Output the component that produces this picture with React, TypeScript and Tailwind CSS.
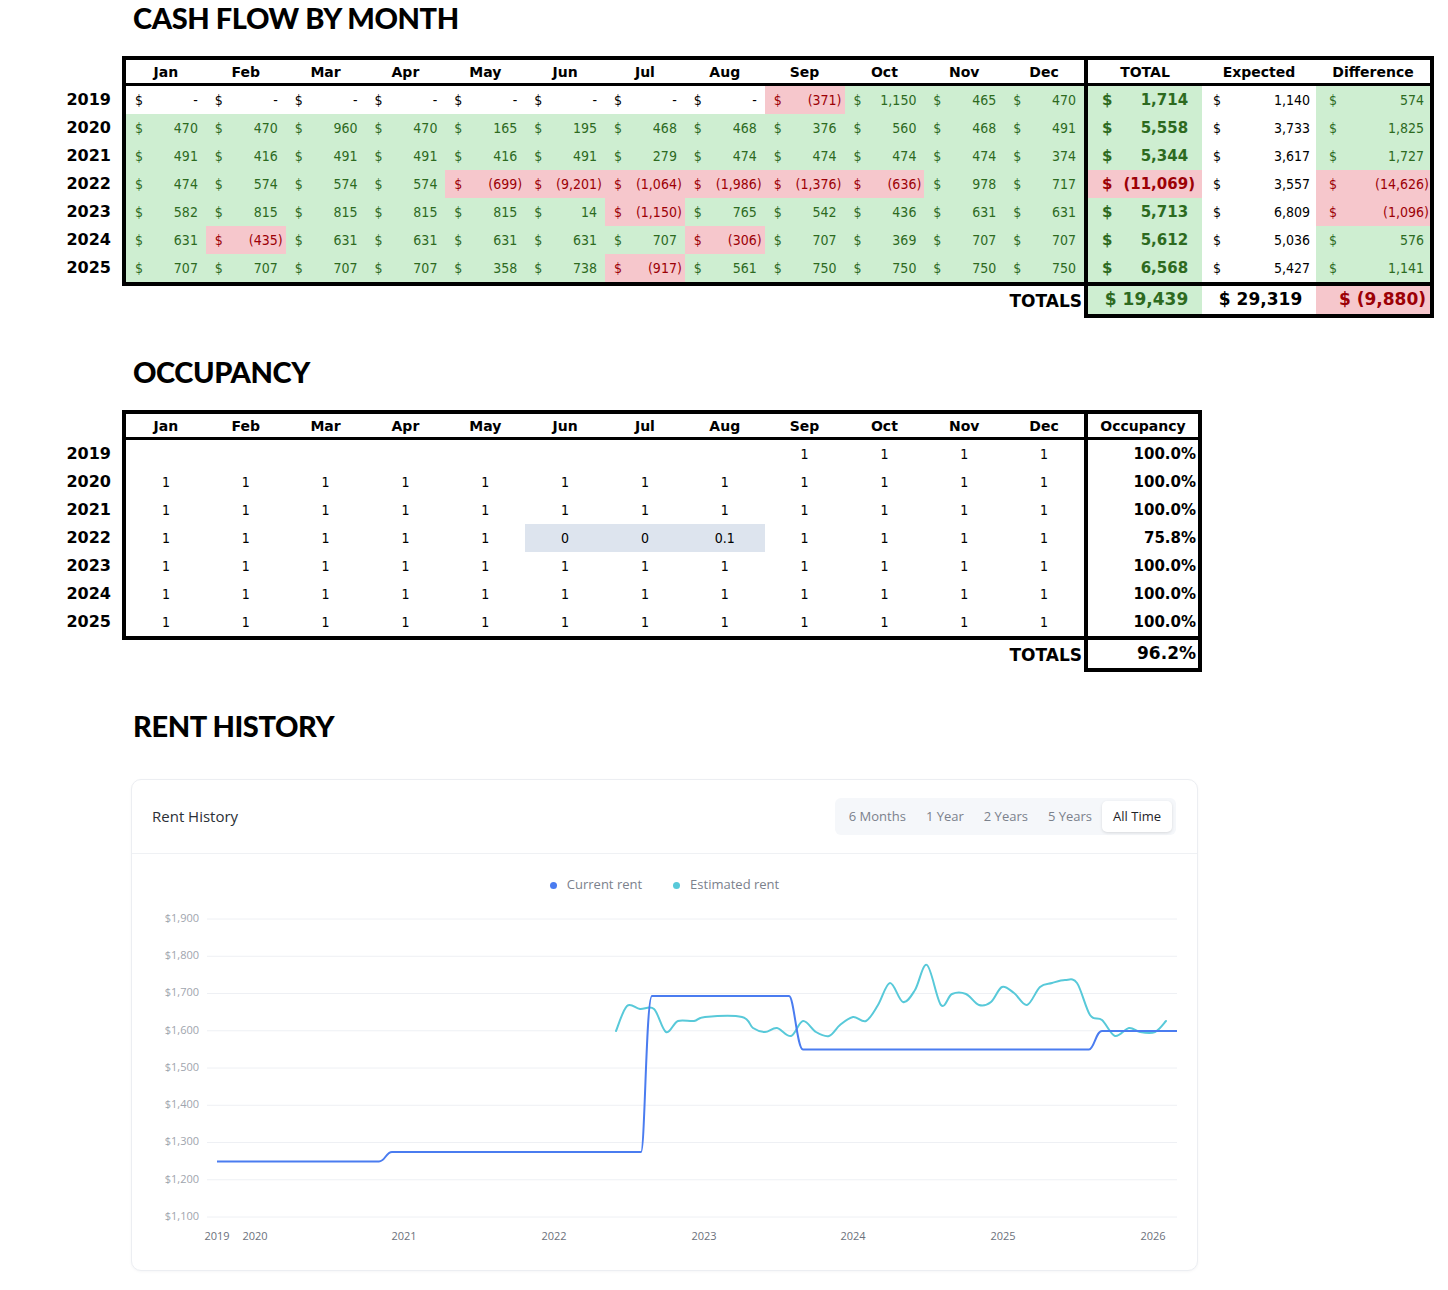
import React from "react";

const months = ["Jan", "Feb", "Mar", "Apr", "May", "Jun", "Jul", "Aug", "Sep", "Oct", "Nov", "Dec"];

type CashRow = { year: number; m: number[]; total: number; expected: number; diff: number };

const cashRows: CashRow[] = [
	{ year: 2019, m: [0, 0, 0, 0, 0, 0, 0, 0, -371, 1150, 465, 470], total: 1714, expected: 1140, diff: 574 },
	{ year: 2020, m: [470, 470, 960, 470, 165, 195, 468, 468, 376, 560, 468, 491], total: 5558, expected: 3733, diff: 1825 },
	{ year: 2021, m: [491, 416, 491, 491, 416, 491, 279, 474, 474, 474, 474, 374], total: 5344, expected: 3617, diff: 1727 },
	{ year: 2022, m: [474, 574, 574, 574, -699, -9201, -1064, -1986, -1376, -636, 978, 717], total: -11069, expected: 3557, diff: -14626 },
	{ year: 2023, m: [582, 815, 815, 815, 815, 14, -1150, 765, 542, 436, 631, 631], total: 5713, expected: 6809, diff: -1096 },
	{ year: 2024, m: [631, -435, 631, 631, 631, 631, 707, -306, 707, 369, 707, 707], total: 5612, expected: 5036, diff: 576 },
	{ year: 2025, m: [707, 707, 707, 707, 358, 738, -917, 561, 750, 750, 750, 750], total: 6568, expected: 5427, diff: 1141 },
];

type OccRow = { year: number; m: (number | null)[]; pct: string };

const occRows: OccRow[] = [
	{ year: 2019, m: [null, null, null, null, null, null, null, null, 1, 1, 1, 1], pct: "100.0%" },
	{ year: 2020, m: Array(12).fill(1), pct: "100.0%" },
	{ year: 2021, m: Array(12).fill(1), pct: "100.0%" },
	{ year: 2022, m: [1, 1, 1, 1, 1, 0, 0, 0.1, 1, 1, 1, 1], pct: "75.8%" },
	{ year: 2023, m: Array(12).fill(1), pct: "100.0%" },
	{ year: 2024, m: Array(12).fill(1), pct: "100.0%" },
	{ year: 2025, m: Array(12).fill(1), pct: "100.0%" },
];

const fmt = (v: number) => (v < 0 ? `(${Math.abs(v).toLocaleString("en-US")})` : v.toLocaleString("en-US"));

const cond = "font-['DejaVu_Sans_Condensed','DejaVu_Sans',sans-serif]";
const bold = "font-['DejaVu_Sans',sans-serif] font-bold";

const tone = (v: number) => {
	if (v > 0) return "bg-[#ceeed1] text-[#2d6a1f]";
	if (v < 0) return "bg-[#f6c7cc] text-[#9c0006]";
	return "text-black";
};

const Title = ({ children }: { children: React.ReactNode }) => (
	<h2 className="pl-[133px] font-['Lato',sans-serif] font-black text-[29px] leading-[36px] tracking-[-0.4px] text-black">{children}</h2>
);

const Paren = ({ show }: { show: boolean }) => <span className={show ? "invisible" : "hidden"}>)</span>;

const MonthCell = ({ v }: { v: number }) => (
	<div className={`flex h-[28px] items-center justify-between pl-[9px] pr-[3px] text-[14px] ${cond} ${tone(v)}`}>
		<span>$</span>
		<span>
			{v === 0 ? "-" : fmt(v)}
			<Paren show={v >= 0} />
		</span>
	</div>
);

const YearCol = ({ years }: { years: number[] }) => (
	<div className={`w-[122px] pt-[30px] pr-[11px] text-right text-[16px] text-black ${bold}`}>
		{years.map((y) => (
			<div key={y} className="flex h-[28px] items-center justify-end">
				{y}
			</div>
		))}
	</div>
);

const HeadCell = ({ label }: { label: string }) => (
	<div className={`flex items-center justify-center pt-[2px] text-[14px] text-black ${bold}`}>{label}</div>
);

const CashFlow = () => (
	<section>
		<Title>CASH FLOW BY MONTH</Title>
		<div className="mt-[20px] flex">
			<YearCol years={cashRows.map((r) => r.year)} />
			<div className="flex border-[4px] border-black">
				<div className="w-[958px]">
					<div className="grid h-[26px] grid-cols-12 border-b-[3px] border-black">
						{months.map((m) => (
							<HeadCell key={m} label={m} />
						))}
					</div>
					{cashRows.map((r) => (
						<div key={r.year} className="grid grid-cols-12">
							{r.m.map((v, i) => (
								<MonthCell key={i} v={v} />
							))}
						</div>
					))}
				</div>
				<div className="w-[4px] bg-black" />
				<div className="w-[342px]">
					<div className="grid h-[26px] grid-cols-3 border-b-[3px] border-black">
						<HeadCell label="TOTAL" />
						<HeadCell label="Expected" />
						<HeadCell label="Difference" />
					</div>
					{cashRows.map((r) => (
						<div key={r.year} className="grid grid-cols-3">
							<div className={`flex h-[28px] items-center justify-between pl-[14px] pr-[7px] text-[15px] ${bold} ${tone(r.total)}`}>
								<span>$</span>
								<span>
									{fmt(r.total)}
									<Paren show={r.total >= 0} />
								</span>
							</div>
							<div className={`flex h-[28px] items-center justify-between pl-[11px] pr-[1px] text-[14px] text-black ${cond}`}>
								<span>$</span>
								<span>
									{fmt(r.expected)}
									<Paren show />
								</span>
							</div>
							<div className={`flex h-[28px] items-center justify-between pl-[13px] pr-[1px] text-[14px] ${cond} ${tone(r.diff)}`}>
								<span>$</span>
								<span>
									{fmt(r.diff)}
									<Paren show={r.diff >= 0} />
								</span>
							</div>
						</div>
					))}
				</div>
			</div>
		</div>
		<div className="flex">
			<div className={`flex w-[1084px] items-center justify-end pr-[2px] text-[17px] text-black ${bold}`}>TOTALS</div>
			<div className={`grid h-[32px] w-[350px] grid-cols-3 border-[4px] border-t-0 border-black text-[17px] ${bold}`}>
				<div className="flex items-center justify-end bg-[#ceeed1] pr-[6px] text-[#2d6a1f]">
					$ 19,439
					<Paren show />
				</div>
				<div className="flex items-center justify-end pr-[6px] text-black">
					$ 29,319
					<Paren show />
				</div>
				<div className="flex items-center justify-end bg-[#f6c7cc] pr-[4px] text-[#9c0006]">$ (9,880)</div>
			</div>
		</div>
	</section>
);

const Occupancy = () => (
	<section className="mt-[36px]">
		<Title>OCCUPANCY</Title>
		<div className="mt-[20px] flex">
			<YearCol years={occRows.map((r) => r.year)} />
			<div className="flex border-[4px] border-black">
				<div className="w-[958px]">
					<div className="grid h-[26px] grid-cols-12 border-b-[3px] border-black">
						{months.map((m) => (
							<HeadCell key={m} label={m} />
						))}
					</div>
					{occRows.map((r) => (
						<div key={r.year} className="grid grid-cols-12">
							{r.m.map((v, i) => (
								<div
									key={i}
									className={`flex h-[28px] items-center justify-center text-[14px] text-black ${cond} ${
										r.year === 2022 && i >= 5 && i <= 7 ? "bg-[#dde4ee]" : ""
									}`}
								>
									{v === null ? "" : String(v)}
								</div>
							))}
						</div>
					))}
				</div>
				<div className="w-[4px] bg-black" />
				<div className="w-[110px]">
					<div className="grid h-[26px] border-b-[3px] border-black">
						<HeadCell label="Occupancy" />
					</div>
					{occRows.map((r) => (
						<div key={r.year} className={`flex h-[28px] items-center justify-end pr-[2px] text-[15px] text-black ${bold}`}>
							{r.pct}
						</div>
					))}
				</div>
			</div>
		</div>
		<div className="flex">
			<div className={`flex w-[1084px] items-center justify-end pr-[2px] text-[17px] text-black ${bold}`}>TOTALS</div>
			<div className={`flex h-[32px] w-[118px] items-center justify-end border-[4px] border-t-0 border-black pr-[2px] text-[17px] text-black ${bold}`}>
				96.2%
			</div>
		</div>
	</section>
);

const teal: [number, number][] = [
	[616, 1031], [627, 1006], [640, 1009], [654, 1009], [666, 1032], [678, 1021], [694, 1021], [705, 1017],
	[742, 1017], [753, 1028], [765, 1032], [777, 1028], [791, 1036], [803, 1021], [816, 1032], [829, 1036],
	[840, 1025], [853, 1017], [866, 1021], [878, 1005], [890, 983], [903, 1002], [915, 990], [927, 965],
	[941, 1005], [952, 994], [966, 994], [979, 1005], [991, 1002], [1002, 987], [1014, 993], [1027, 1005],
	[1040, 987], [1052, 983], [1065, 980], [1077, 983], [1090, 1015], [1102, 1020], [1115, 1036], [1129, 1028],
	[1140, 1032], [1155, 1032], [1166, 1021],
];

// catmull-rom -> cubic bezier
const smooth = (pts: [number, number][]) => {
	let d = `M${pts[0][0]},${pts[0][1]}`;
	for (let i = 0; i < pts.length - 1; i++) {
		const p0 = pts[i - 1] || pts[i];
		const p1 = pts[i];
		const p2 = pts[i + 1];
		const p3 = pts[i + 2] || p2;
		const c1x = p1[0] + (p2[0] - p0[0]) / 6;
		const c1y = p1[1] + (p2[1] - p0[1]) / 6;
		const c2x = p2[0] - (p3[0] - p1[0]) / 6;
		const c2y = p2[1] - (p3[1] - p1[1]) / 6;
		d += ` C${c1x.toFixed(1)},${c1y.toFixed(1)} ${c2x.toFixed(1)},${c2y.toFixed(1)} ${p2[0]},${p2[1]}`;
	}
	return d;
};

const bluePath =
	"M217,1161.5 L379,1161.5 C385,1161.5 386,1152 392,1152 L641,1152 C645,1152 646,996 652,996 L789,996 C794,996 797,1049.5 803,1049.5 L1089,1049.5 C1094,1049.5 1096,1031 1102,1031 L1177,1031";

const yTicks = ["$1,900", "$1,800", "$1,700", "$1,600", "$1,500", "$1,400", "$1,300", "$1,200", "$1,100"];
const xTicks: [string, number][] = [
	["2019", 217], ["2020", 255], ["2021", 404], ["2022", 554], ["2023", 704], ["2024", 853], ["2025", 1003], ["2026", 1153],
];

const tabs = ["6 Months", "1 Year", "2 Years", "5 Years", "All Time"];

const RentHistory = () => (
	<section className="mt-[36px] pb-[19px]">
		<Title>RENT HISTORY</Title>
		<div className="ml-[131px] mt-[35px] h-[492px] w-[1067px] overflow-hidden rounded-[10px] border border-[#eceef2] bg-white font-['Open_Sans',sans-serif] shadow-[0_1px_3px_rgba(16,24,40,0.04)]">
			<div className="flex h-[74px] items-center justify-between border-b border-[#eff1f4] pl-[20px] pr-[21px]">
				<div className="text-[15px] text-[#2b2f36]">Rent History</div>
				<div className="flex rounded-[6px] bg-[#f5f7fa] p-[3px] px-[4px]">
					{tabs.map((t) => (
						<div
							key={t}
							className={
								t === "All Time"
									? "rounded-[5px] bg-white px-[11px] py-[6px] text-[13px] text-[#1f2328] shadow-[0_1px_3px_rgba(0,0,0,0.12)]"
									: "px-[10px] py-[6px] text-[13px] text-[#7b818c]"
							}
						>
							{t}
						</div>
					))}
				</div>
			</div>
			<div className="mt-[21px] flex h-[20px] items-center justify-center gap-[31px] text-[13px] text-[#7b818c]">
				<div className="flex items-center gap-[10px]">
					<span className="h-[7px] w-[7px] rounded-full bg-[#4a7cf0]" />
					Current rent
				</div>
				<div className="flex items-center gap-[10px]">
					<span className="h-[7px] w-[7px] rounded-full bg-[#58c9d9]" />
					Estimated rent
				</div>
			</div>
			<svg className="mt-[10px] block" width="1065" height="350" viewBox="132 905 1065 350">
				{yTicks.map((t, i) => {
					const y = 919 + i * 37.25;
					return (
						<g key={t}>
							<line x1="207" x2="1177" y1={y} y2={y} stroke="#eef0f4" strokeWidth="1" />
							<text x="199" y={y} textAnchor="end" dominantBaseline="middle" fontSize="11" fill="#a0a5ae" fontFamily="Open Sans, sans-serif">
								{t}
							</text>
						</g>
					);
				})}
				{xTicks.map(([t, x]) => (
					<text key={t} x={x} y="1237" textAnchor="middle" dominantBaseline="middle" fontSize="11" fill="#6b717c" fontFamily="Open Sans, sans-serif">
						{t}
					</text>
				))}
				<path d={smooth(teal)} fill="none" stroke="#58c9d9" strokeWidth="2" strokeLinejoin="round" strokeLinecap="round" />
				<path d={bluePath} fill="none" stroke="#4a7cf0" strokeWidth="2" strokeLinejoin="round" />
			</svg>
		</div>
	</section>
);

export default function App() {
	return (
		<div className="w-[1448px] bg-white">
			<CashFlow />
			<Occupancy />
			<RentHistory />
		</div>
	);
}
